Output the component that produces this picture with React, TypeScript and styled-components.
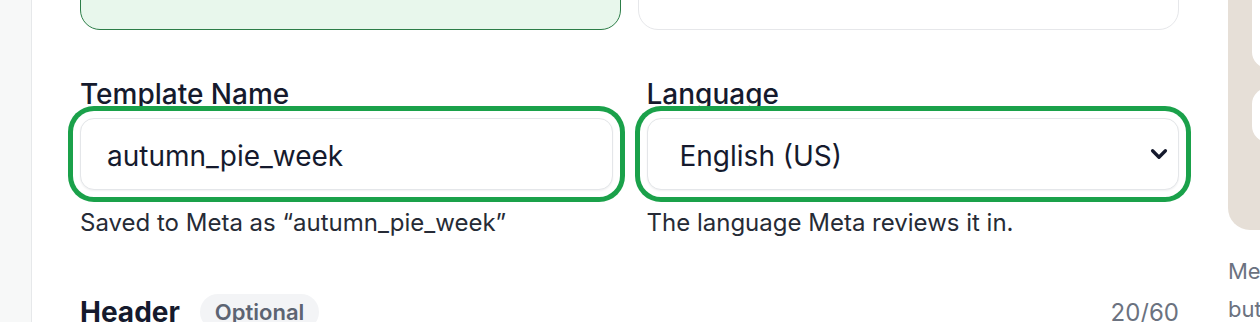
import styled, { createGlobalStyle } from "styled-components";

const GlobalStyle = createGlobalStyle`
  html, body {
    margin: 0;
    padding: 0;
    background: #ffffff;
    overflow: hidden;
  }
  body {
    font-family: Inter, "Noto Sans", "Liberation Sans", sans-serif;
    color: #151a2d;
  }
`;

const Page = styled.div`
  display: flex;
  width: 1260px;
  height: 322px;
  overflow: hidden;
`;

const Sidebar = styled.aside`
  flex: 0 0 31px;
  background: #f7f8f8;
  border-right: 1px solid #e6e8ea;
`;

const Main = styled.main`
  flex: 0 0 1099px;
  padding-left: 48px;
  margin-top: -50px;
`;

const CardRow = styled.div`
  display: grid;
  grid-template-columns: 1fr 1fr;
  column-gap: 17px;
`;

const ChoiceCard = styled.div<{ $selected?: boolean }>`
  height: 80px;
  border-radius: 20px;
  box-sizing: border-box;
  background: ${(p) => (p.$selected ? "#e8f7ec" : "#ffffff")};
  border: ${(p) => (p.$selected ? "1.5px solid #2c7d47" : "1.5px solid #e6e7ea")};
`;

const FieldRow = styled.div`
  display: grid;
  grid-template-columns: 1fr 1fr;
  column-gap: 34px;
  margin-top: 49px;
`;

const Field = styled.div`
  display: flex;
  flex-direction: column;
`;

const Label = styled.label`
  font-size: 28px;
  line-height: 31px;
  font-weight: 500;
  color: #151a2d;
  margin-bottom: 8px;
`;

const ringShadow = `0 1px 2px rgba(17, 24, 39, 0.06), 0 0 0 7px #ffffff, 0 0 0 12px #1aa14a`;

const Box = styled.div<{ $pad: number }>`
  display: flex;
  align-items: center;
  justify-content: space-between;
  height: 72px;
  box-sizing: border-box;
  padding: 4px 8px 0 ${(p) => p.$pad}px;
  border: 1.5px solid #e4e6e9;
  border-radius: 14px;
  background: #ffffff;
  box-shadow: ${ringShadow};
  font-size: 28px;
  color: #151a2d;

  svg {
    margin-top: -4px;
  }
`;

const Helper = styled.p`
  margin: 19px 0 0;
  font-size: 24px;
  line-height: 28px;
  color: #262b36;
`;

const SectionHead = styled.div`
  display: flex;
  align-items: center;
  justify-content: space-between;
  margin-top: 57px;
`;

const HeadLeft = styled.div`
  display: flex;
  align-items: center;
  gap: 20px;
`;

const Title = styled.h3`
  margin: 0;
  font-size: 28px;
  line-height: 31px;
  font-weight: 700;
  color: #151a2d;
`;

const Pill = styled.span`
  display: inline-flex;
  align-items: center;
  height: 36px;
  padding: 0 15px;
  border-radius: 999px;
  background: #f3f4f6;
  color: #5d6472;
  font-size: 22px;
  font-weight: 600;
`;

const Counter = styled.span`
  font-size: 24px;
  color: #6b7280;
`;

const Preview = styled.aside`
  flex: 0 0 300px;
  margin-left: 49px;
`;

const PhoneFrame = styled.div`
  margin-top: -50px;
  height: 280px;
  box-sizing: border-box;
  padding: 0 0 38px 24px;
  background: #e6dfd7;
  border-radius: 0 0 0 22px;
  display: flex;
  flex-direction: column;
  gap: 20px;
`;

const Bubble = styled.div<{ $h: number; $top?: boolean }>`
  height: ${(p) => p.$h}px;
  background: #ffffff;
  border-radius: ${(p) => (p.$top ? "0 0 0 16px" : "16px 0 0 16px")};
`;

const Note = styled.p`
  margin: 22px 0 0;
  font-size: 22px;
  line-height: 38px;
  color: #6b7280;
  white-space: nowrap;
`;

const Chevron = () => (
  <svg width="22" height="22" viewBox="0 0 24 24" fill="none" stroke="#151a2d" strokeWidth="3.6" strokeLinecap="round" strokeLinejoin="round">
    <polyline points="5 8.5 12 15.5 19 8.5" />
  </svg>
);

export default function App() {
  return (
    <>
      <GlobalStyle />
      <Page>
        <Sidebar />
        <Main>
          <CardRow>
            <ChoiceCard $selected />
            <ChoiceCard />
          </CardRow>
          <FieldRow>
            <Field>
              <Label>Template Name</Label>
              <Box $pad={26}>autumn_pie_week</Box>
              <Helper>Saved to Meta as “autumn_pie_week”</Helper>
            </Field>
            <Field>
              <Label>Language</Label>
              <Box $pad={32}>
                English (US)
                <Chevron />
              </Box>
              <Helper>The language Meta reviews it in.</Helper>
            </Field>
          </FieldRow>
          <SectionHead>
            <HeadLeft>
              <Title>Header</Title>
              <Pill>Optional</Pill>
            </HeadLeft>
            <Counter>20/60</Counter>
          </SectionHead>
        </Main>
        <Preview>
          <PhoneFrame>
            <Bubble $h={118} $top />
            <Bubble $h={54} />
          </PhoneFrame>
          <Note>
            Meta approves most templates in minutes,
            <br />
            buttons and links are checked too.
          </Note>
        </Preview>
      </Page>
    </>
  );
}
